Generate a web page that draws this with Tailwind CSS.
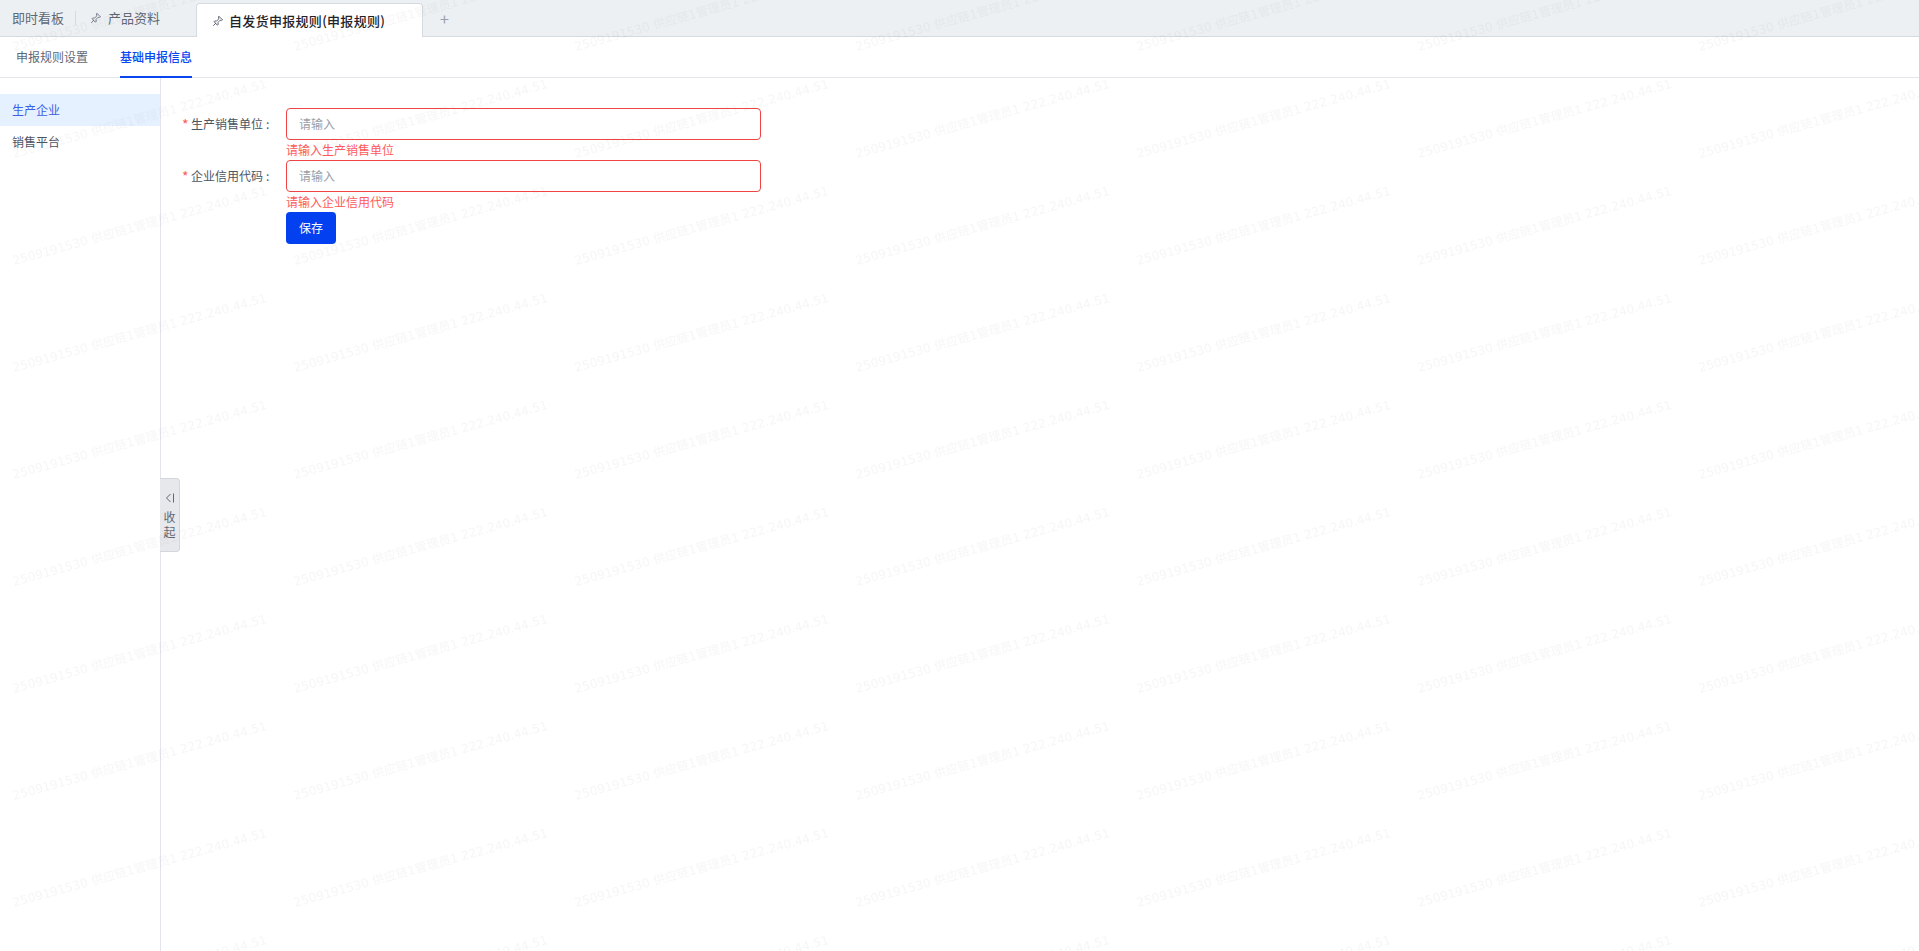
<!DOCTYPE html>
<html lang="zh-CN">
<head>
<meta charset="utf-8">
<title>自发货申报规则</title>
<script src="https://cdn.jsdelivr.net/npm/@tailwindcss/browser@4"></script>
</head>
<body class="font-['Noto_Sans_CJK_SC',sans-serif] text-xs text-[#4b5563] bg-white">
<div class="relative w-full h-[951px] overflow-hidden flex flex-col">

  <div class="h-[37px] shrink-0 bg-[#edf0f3] border-b border-[#d5dae0] flex items-end relative">
    <div class="h-[36px] flex items-center pl-3 text-[13px] text-[#5f6875]">
      <span>即时看板</span>
      <span class="ml-[11px] w-px h-[14px] bg-[#d5dae0]"></span>
      <svg class="ml-[14px] w-3 h-3" viewBox="0 0 16 16" fill="none" stroke="#6b7280" stroke-width="1.2" stroke-linejoin="round" stroke-linecap="round"><path d="M9.5 2 14 6.5 12.8 7.2 10.8 7 8 10l.3 2.7-1.2.8L2.8 9l.9-1.1L6 8.2 9 5.2 8.8 3.2z"/><path d="M5 11 2 14"/></svg>
      <span class="ml-[6px]">产品资料</span>
    </div>
    <div class="ml-[36px] w-[227px] h-[34px] -mb-px bg-white border border-b-0 border-[#d5dae0] rounded-t flex items-center pl-[15px] text-[13px] font-medium text-[#1f2329]">
      <svg class="w-3 h-3" viewBox="0 0 16 16" fill="none" stroke="#4b5563" stroke-width="1.2" stroke-linejoin="round" stroke-linecap="round"><path d="M9.5 2 14 6.5 12.8 7.2 10.8 7 8 10l.3 2.7-1.2.8L2.8 9l.9-1.1L6 8.2 9 5.2 8.8 3.2z"/><path d="M5 11 2 14"/></svg>
      <span class="ml-[5px] tracking-[0.3px]">自发货申报规则(申报规则)</span>
    </div>
    <div class="h-[36px] ml-[17px] flex items-center text-base text-[#9aa1ab]">+</div>
  </div>

  <div class="h-[41px] shrink-0 border-b border-[#e3e5ea] flex items-stretch pl-4 gap-8">
    <div class="flex items-center text-[#5f6875]">申报规则设置</div>
    <div class="flex items-center font-medium text-[#0a46f0] border-b-2 border-[#0a46f0] h-[41px] pt-px">基础申报信息</div>
  </div>

  <div class="flex-1 flex min-h-0 relative">
    <aside class="w-[161px] shrink-0 border-r border-[#e3e5ea] pt-4">
      <div class="h-8 pl-3 flex items-center bg-[#e6f1ff] text-[#3a5fe8]">生产企业</div>
      <div class="h-8 pl-3 flex items-center text-[#4b5563]">销售平台</div>
    </aside>

    <div class="absolute left-[160px] top-[400px] w-5 h-[74px] bg-[#e6e8ec] border border-l-0 border-[#d3d6dc] rounded-r flex flex-col items-center pt-[13px] leading-[15px] text-[#5f6875] z-10">
      <svg class="w-2.5 h-3 mb-[5px]" viewBox="0 0 10 12" fill="none" stroke="#5f6875" stroke-width="1"><path d="M5.5 2 1.5 6l4 4"/><path d="M8.5 1.5v9"/></svg>
      <span>收</span>
      <span>起</span>
    </div>

    <form class="flex-1 pt-[30px] pl-[21px] flex flex-col items-start">
      <div class="flex items-start">
        <label class="w-[104px] h-8 flex items-center text-[#4b5563]"><span class="text-[#ff5a5a] w-[9px] text-sm">*</span>生产销售单位<span class="ml-[3px]">:</span></label>
        <div>
          <div class="w-[475px] h-8 border border-[#f04444] rounded flex items-center pl-3 text-[#9aa0a8]">请输入</div>
          <div class="h-5 leading-[20px] text-[#ff5a5a]">请输入生产销售单位</div>
        </div>
      </div>
      <div class="flex items-start">
        <label class="w-[104px] h-8 flex items-center text-[#4b5563]"><span class="text-[#ff5a5a] w-[9px] text-sm">*</span>企业信用代码<span class="ml-[3px]">:</span></label>
        <div>
          <div class="w-[475px] h-8 border border-[#f04444] rounded flex items-center pl-3 text-[#9aa0a8]">请输入</div>
          <div class="h-5 leading-[20px] text-[#ff5a5a]">请输入企业信用代码</div>
        </div>
      </div>
      <button type="button" class="ml-[104px] w-[50px] h-8 bg-[#0340f0] text-white rounded flex items-center justify-center">保存</button>
    </form>
  </div>

  <svg class="absolute inset-0 w-full h-full pointer-events-none z-20" xmlns="http://www.w3.org/2000/svg">
    <defs>
      <pattern id="wm" x="0" y="-34" width="281" height="107" patternUnits="userSpaceOnUse">
        <text x="14" y="85" transform="rotate(-15.5 14 85)" fill="#000" fill-opacity="0.035" font-size="12.2" font-family="'DejaVu Sans','Noto Sans CJK SC',sans-serif">2509191530 供应链1管理员1 222.240.44.51</text>
      </pattern>
    </defs>
    <rect width="100%" height="100%" fill="url(#wm)"/>
  </svg>
</div>
</body>
</html>
